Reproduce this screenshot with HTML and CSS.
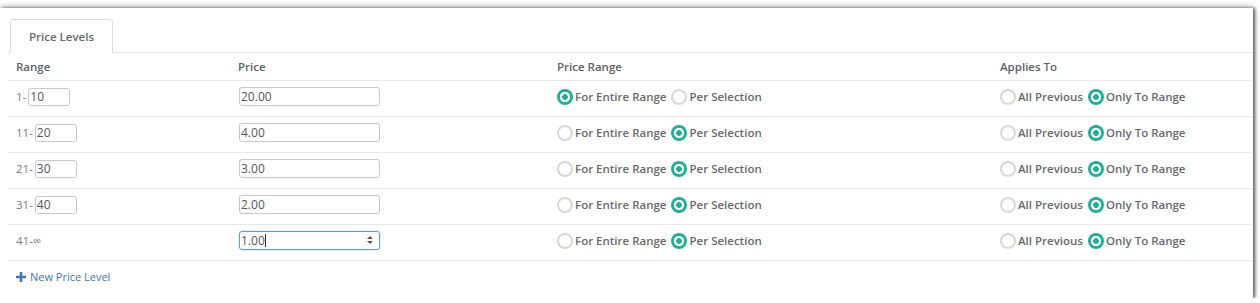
FILE: index.html
```html
<!DOCTYPE html>
<html>
<head>
<meta charset="utf-8">
<link rel="stylesheet" href="styles.css">
</head>
<body>
<div class="card">
  <div class="tabs">
    <div class="tab">Price Levels</div>
  </div>
  <div class="table">
    <div class="row head">
      <div class="cell">Range</div>
      <div class="cell">Price</div>
      <div class="cell">Price Range</div>
      <div class="cell">Applies To</div>
    </div>

    <div class="row">
      <div class="cell"><span class="from">1-</span><input class="qty" value="10"></div>
      <div class="cell"><input class="price" value="20.00"></div>
      <div class="cell radios"><span class="radio on"></span><span class="lbl">For Entire Range</span><span class="radio"></span><span class="lbl">Per Selection</span></div>
      <div class="cell radios"><span class="radio"></span><span class="lbl">All Previous</span><span class="radio on"></span><span class="lbl">Only To Range</span></div>
    </div>

    <div class="row">
      <div class="cell"><span class="from">11-</span><input class="qty" value="20"></div>
      <div class="cell"><input class="price" value="4.00"></div>
      <div class="cell radios"><span class="radio"></span><span class="lbl">For Entire Range</span><span class="radio on"></span><span class="lbl">Per Selection</span></div>
      <div class="cell radios"><span class="radio"></span><span class="lbl">All Previous</span><span class="radio on"></span><span class="lbl">Only To Range</span></div>
    </div>

    <div class="row">
      <div class="cell"><span class="from">21-</span><input class="qty" value="30"></div>
      <div class="cell"><input class="price" value="3.00"></div>
      <div class="cell radios"><span class="radio"></span><span class="lbl">For Entire Range</span><span class="radio on"></span><span class="lbl">Per Selection</span></div>
      <div class="cell radios"><span class="radio"></span><span class="lbl">All Previous</span><span class="radio on"></span><span class="lbl">Only To Range</span></div>
    </div>

    <div class="row">
      <div class="cell"><span class="from">31-</span><input class="qty" value="40"></div>
      <div class="cell"><input class="price" value="2.00"></div>
      <div class="cell radios"><span class="radio"></span><span class="lbl">For Entire Range</span><span class="radio on"></span><span class="lbl">Per Selection</span></div>
      <div class="cell radios"><span class="radio"></span><span class="lbl">All Previous</span><span class="radio on"></span><span class="lbl">Only To Range</span></div>
    </div>

    <div class="row">
      <div class="cell"><span class="from">41-∞</span></div>
      <div class="cell"><div class="price focus"><span>1.00</span><span class="caret"></span><span class="spin"><i class="up"></i><i class="down"></i></span></div></div>
      <div class="cell radios"><span class="radio"></span><span class="lbl">For Entire Range</span><span class="radio on"></span><span class="lbl">Per Selection</span></div>
      <div class="cell radios"><span class="radio"></span><span class="lbl">All Previous</span><span class="radio on"></span><span class="lbl">Only To Range</span></div>
    </div>
  </div>
  <a class="add" href="#"><svg width="10" height="10" viewBox="0 0 10 10"><path d="M5 0V10M0 5H10" stroke="#3a78b9" stroke-width="2.6"/></svg>New Price Level</a>
</div>
</body>
</html>
```

FILE: styles.css
```css
html, body {
  margin: 0;
  padding: 0;
  background: #fff;
  overflow: hidden;
}
body {
  font-family: "Open Sans", "Liberation Sans", sans-serif;
  font-size: 12px;
  color: #676a6c;
  padding-top: 8px;
}
.card {
  width: 1253px;
  height: 290px;
  background: #fff;
  box-shadow: 2px 0 3px rgba(0,0,0,0.55), 0 0 8px rgba(0,0,0,0.35);
  box-sizing: border-box;
  padding: 11px 0 0 8px;
}
.tabs {
  display: flex;
  border-bottom: 1px solid #e4e6e8;
  padding-left: 2px;
  height: 33px;
}
.tab {
  width: 103px;
  height: 34px;
  box-sizing: border-box;
  border: 1px solid #dcdee0;
  border-bottom: none;
  border-radius: 4px 4px 0 0;
  background: #fff;
  display: flex;
  align-items: center;
  justify-content: center;
  font-weight: 600;
  color: #676a6c;
  font-size: 11.5px;
}
.table {
  display: flex;
  flex-direction: column;
}
.row {
  display: grid;
  grid-template-columns: 222px 319px 443px 1fr;
  height: 31px;
  padding-bottom: 4px;
  border-bottom: 1px solid #e7eaec;
  align-items: center;
}
.row.head {
  height: 27px;
  padding-bottom: 0;
  font-weight: 600;
  color: #5e6163;
  font-size: 11.5px;
}
.cell {
  padding-left: 8px;
  display: flex;
  align-items: center;
  white-space: nowrap;
}
.from {
  color: #7a7d80;
  font-size: 11.5px;
}
input {
  font-family: "Open Sans", "Liberation Sans", sans-serif;
  font-size: 12px;
  color: #555;
  outline: none;
  margin: 0;
}
.qty {
  margin-left: 2px;
  width: 42px;
  height: 18px;
  box-sizing: border-box;
  border: 1px solid #c9c9c9;
  border-radius: 3px;
  padding: 0 1px;
}
.price {
  margin-left: 1px;
  width: 141px;
  height: 19px;
  box-sizing: border-box;
  border: 1px solid #c9c9c9;
  border-radius: 3px;
  padding: 0 1px;
  font-size: 12px;
  color: #555;
}
.price.focus {
  display: flex;
  align-items: center;
  border-color: #5e9ed6;
  box-shadow: 0 0 2px rgba(94,158,214,0.6);
  position: relative;
}
.caret {
  width: 1px;
  height: 13px;
  background: #333;
}
.spin {
  position: absolute;
  right: 6px;
  top: 4px;
  display: flex;
  flex-direction: column;
  gap: 2px;
}
.spin i {
  display: block;
  width: 0;
  height: 0;
  border-left: 3px solid transparent;
  border-right: 3px solid transparent;
}
.spin .up { border-bottom: 3px solid #555; }
.spin .down { border-top: 3px solid #555; }
.radios {
  font-weight: 600;
  color: #676a6c;
  font-size: 11.5px;
}
.radio {
  width: 16px;
  height: 16px;
  border-radius: 50%;
  box-sizing: border-box;
  border: 2px solid #d8d8d8;
  background: #fff;
  flex: none;
  margin-right: 2px;
}
.radio.on {
  border: none;
  background: radial-gradient(circle, #1ab394 0 2.6px, #fff 3.1px 4.9px, #1ab394 5.4px);
}
.lbl + .radio {
  margin-left: 5px;
}
.add {
  display: flex;
  align-items: center;
  gap: 4px;
  margin: 8px 0 0 8px;
  color: #3a78b9;
  text-decoration: none;
  font-size: 11px;
}
```
